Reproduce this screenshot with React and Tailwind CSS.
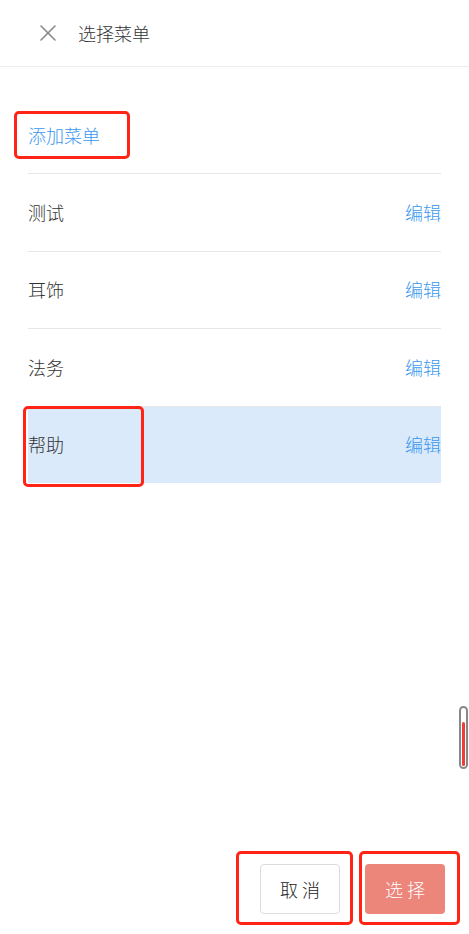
import { X } from "lucide-react";

const menus = ["测试", "耳饰", "法务", "帮助"];

function Mark({ className }) {
  return (
    <div
      className={`absolute border-[3px] border-[#ff2416] rounded-[5px] pointer-events-none ${className}`}
    />
  );
}

export default function App() {
  const active = "帮助";

  return (
    <div
      className="relative w-[469px] h-[934px] bg-white flex flex-col text-[#333] font-light"
      style={{ fontFamily: '"Noto Sans CJK SC", "Noto Sans", sans-serif' }}
    >
      <div className="h-[67px] shrink-0 border-b border-[#ececec] flex items-center pl-[34px] gap-[16px]">
        <X size={28} strokeWidth={1.4} className="text-[#8a8a8a]" />
        <span className="text-[18px] text-[#333]">选择菜单</span>
      </div>

      <div className="flex-1 px-[28px]">
        <div className="mt-[40px] mb-[10px] h-[56px] flex items-center text-[18px] text-[#3a97f0]">
          添加菜单
        </div>

        {menus.map((name) => (
          <div
            key={name}
            className={`h-[77.5px] border-t border-[#e6e6e6] flex items-center justify-between text-[18px] ${
              name === active ? "bg-[#dbeafb]" : ""
            }`}
          >
            <span className="text-[#333]">{name}</span>
            <span className="text-[#3a97f0]">编辑</span>
          </div>
        ))}
      </div>

      <div className="flex justify-end gap-[25px] pr-[24px] pb-[20px]">
        <button className="w-[80px] h-[50px] rounded-[4px] border border-[#dcdcdc] bg-white text-[18px] text-[#222] tracking-[4px] pl-[4px]">
          取消
        </button>
        <button className="w-[80px] h-[50px] rounded-[4px] bg-[#ec857a] text-[18px] text-white tracking-[4px] pl-[4px]">
          选择
        </button>
      </div>

      <div className="absolute left-[459px] top-[706px] w-[9px] h-[63px] rounded-full border-2 border-[#888] bg-white p-[1px] flex flex-col justify-end">
        <div className="h-[44px] rounded-full bg-[#f23b3b]" />
      </div>

      <Mark className="left-[14px] top-[111px] w-[116px] h-[48px]" />
      <Mark className="left-[23px] top-[406px] w-[121px] h-[81px]" />
      <Mark className="left-[236px] top-[851px] w-[117px] h-[74px]" />
      <Mark className="left-[359px] top-[851px] w-[101px] h-[74px]" />
    </div>
  );
}
